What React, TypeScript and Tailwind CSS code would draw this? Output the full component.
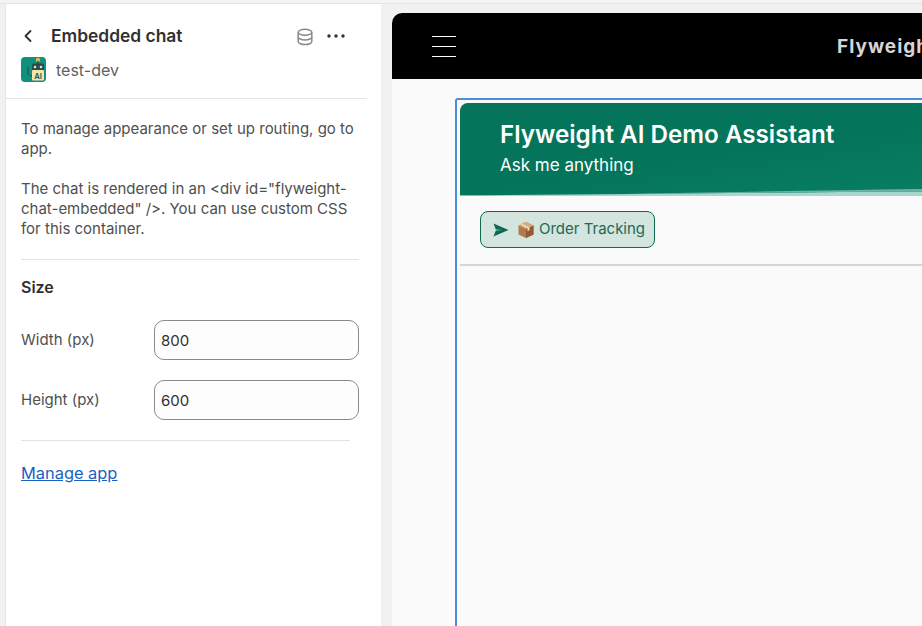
const sans = "font-['Inter','Liberation_Sans',sans-serif]";

const DatabaseIcon = () => (
  <svg width="18" height="18" viewBox="0 0 18 18" fill="none" stroke="#8a8a8a" strokeWidth="1.5">
    <ellipse cx="9" cy="4.2" rx="6.8" ry="3" />
    <path d="M2.2 4.2v9.4c0 1.6 3 3 6.8 3s6.8-1.4 6.8-3V4.2" />
    <path d="M2.2 8.9c0 1.6 3 3 6.8 3s6.8-1.4 6.8-3" />
  </svg>
);

const AppLogo = () => (
  <svg width="25" height="25" viewBox="0 0 25 25">
    <rect width="25" height="25" rx="4" fill="#12907f" />
    <circle cx="17" cy="3" r="2.2" fill="#e8b93f" />
    <rect x="16.3" y="4" width="1.4" height="3" fill="#2b4a48" />
    <rect x="11" y="6.5" width="12" height="8" rx="1.5" fill="#2b4a48" />
    <circle cx="14" cy="10" r="1.3" fill="#cfe9e2" />
    <circle cx="20" cy="10" r="1.3" fill="#cfe9e2" />
    <rect x="11" y="13" width="12" height="10.5" rx="1" fill="#f4e6a8" />
    <text x="17" y="21.5" fontSize="7.5" fontWeight="700" textAnchor="middle" fill="#1c6a5c" fontFamily="Inter, sans-serif">AI</text>
    <path d="M7 10v6c0 2 2 3 4 3" fill="none" stroke="#2b4a48" strokeWidth="1" />
  </svg>
);

const PackageIcon = () => (
  <svg width="18" height="18" viewBox="0 0 18 18">
    <path d="M9 1l7.5 3.4v9.2L9 17l-7.5-3.4V4.4z" fill="#b07a4a" />
    <path d="M9 8l7.5-3.6v9.2L9 17z" fill="#8f5c33" />
    <path d="M1.5 4.4L9 1l7.5 3.4L9 8z" fill="#d9a877" />
    <path d="M5 2.8l7.5 3.5v3l-2 1V7.2L3.2 3.6z" fill="#efd9bd" />
  </svg>
);

const SendIcon = () => (
  <svg width="16" height="14" viewBox="0 0 16 14" fill="#0b6b52">
    <path d="M0.5 0.5L15.5 7 0.5 13.5 2.8 7.6 9 7 2.8 6.4z" />
  </svg>
);

const HeaderWave = () => (
  <svg className="absolute left-0 bottom-0" width="462" height="12" viewBox="0 0 462 12">
    <path d="M0 11.2C150 10.6 300 8.6 462 7.6V12H0z" fill="#a9d6cd" />
    <path d="M150 10.2C260 8.4 360 6.4 462 5V7.6C360 8 260 9 150 10.2z" fill="#6db3a4" />
  </svg>
);

const Field = ({ label, value }: { label: string; value: string }) => (
  <div className="flex items-center h-10">
    <label className="w-[133px] text-[15px] text-[#4f4f4f]">{label}</label>
    <input
      readOnly
      value={value}
      className="w-[205px] h-10 rounded-[10px] border border-[#8a8a8a] bg-[#fdfdfd] px-1.5 text-[15px] text-[#303030] outline-none"
    />
  </div>
);

export default function App() {
  return (
    <div className={`${sans} w-[922px] h-[626px] overflow-hidden bg-[#f1f1f1] flex flex-col`}>
      <div className="h-[4px] shrink-0 bg-[#f4f4f4] border-b border-[#e3e3e3]" />
      <div className="flex flex-1 min-h-0">
        <aside className="ml-[5px] w-[376px] shrink-0 bg-white border-l border-[#e6e6e6]">
          <div className="w-[361px] h-[95px] border-b border-[#e3e3e3] pl-[15px] pt-[20px]">
            <div className="flex items-center h-6">
              <svg width="16" height="16" viewBox="0 0 16 16" fill="none" stroke="#303030" strokeWidth="1.8" strokeLinecap="round" strokeLinejoin="round" className="ml-[-1px]">
                <path d="M10.5 3L5.5 8l5 5" />
              </svg>
              <span className="ml-[15px] w-[132px] whitespace-nowrap text-[17.4px] leading-6 font-semibold text-[#303030]">Embedded chat</span>
              <div className="ml-[113px] translate-y-[1px]"><DatabaseIcon /></div>
              <svg width="18" height="4" viewBox="0 0 18 4" fill="#303030" className="ml-[13px]">
                <circle cx="2" cy="2" r="1.7" />
                <circle cx="9" cy="2" r="1.7" />
                <circle cx="16" cy="2" r="1.7" />
              </svg>
            </div>
            <div className="flex items-center mt-[9px]">
              <AppLogo />
              <span className="ml-[10px] text-base text-[#616161]">test-dev</span>
            </div>
          </div>
          <div className="pl-[15px] w-[353px]">
            <p className="mt-[20px] text-[15px] leading-5 text-[#4f4f4f]">To manage appearance or set up routing, go to app.</p>
            <p className="mt-[20px] text-[15px] leading-5 text-[#4f4f4f]">The chat is rendered in an &lt;div id="flyweight-chat-embedded" /&gt;. You can use custom CSS for this container.</p>
            <div className="mt-[20px] border-t border-[#e3e3e3]" />
            <h2 className="mt-[17px] text-base leading-5 font-semibold text-[#303030]">Size</h2>
            <div className="mt-[23px] flex flex-col gap-5">
              <Field label="Width (px)" value="800" />
              <Field label="Height (px)" value="600" />
            </div>
            <div className="mt-[20px] w-[329px] border-t border-[#e3e3e3]" />
            <a href="#" className="block mt-[22px] text-[16.4px] leading-5 text-[#1a5fc4] underline">Manage app</a>
          </div>
        </aside>
        <main className="ml-[11px] mt-[9px] flex-1 min-w-0 rounded-tl-[10px] overflow-hidden bg-[#fafafa] flex flex-col">
          <div className="h-[66px] shrink-0 bg-black flex items-center pl-[40px]">
            <div className="flex flex-col gap-[9px] w-6 shrink-0">
              <div className="h-px bg-white" />
              <div className="h-px bg-white" />
              <div className="h-px bg-white" />
            </div>
            <span className="ml-[381px] shrink-0 whitespace-nowrap text-[19px] font-bold tracking-[1px] text-[#d6d6d6] translate-y-[1px]">Flyweight AI</span>
          </div>
          <div className="ml-[63px] mt-[19px] w-[800px] flex-1 rounded-t-[3px] border-2 border-b-0 border-[#4c8ddb] pt-[3px] pl-[3px] bg-[#fafafa]">
            <div className="relative h-[93px] rounded-tl-[8px] overflow-hidden bg-[linear-gradient(172deg,#04745a_40%,#0a8468_100%)] pl-[40px] pt-[17px] text-white">
              <div className="text-[24.2px] leading-[30px] font-semibold whitespace-nowrap">Flyweight AI Demo Assistant</div>
              <div className="mt-[3px] text-[17px] leading-6 whitespace-nowrap">Ask me anything</div>
              <HeaderWave />
            </div>
            <div className="h-[70px] border-b-2 border-[#d6d6d6] pl-[20px] pt-[15px]">
              <button className="h-[37px] w-[175px] rounded-[8px] border border-[#0b6b52] bg-[#d4e4de] flex items-center pl-[12px] text-[15px] text-[#1b6a55]">
                <SendIcon />
                <span className="ml-[8px]"><PackageIcon /></span>
                <span className="ml-[4px] whitespace-nowrap">Order Tracking</span>
              </button>
            </div>
          </div>
        </main>
      </div>
    </div>
  );
}
